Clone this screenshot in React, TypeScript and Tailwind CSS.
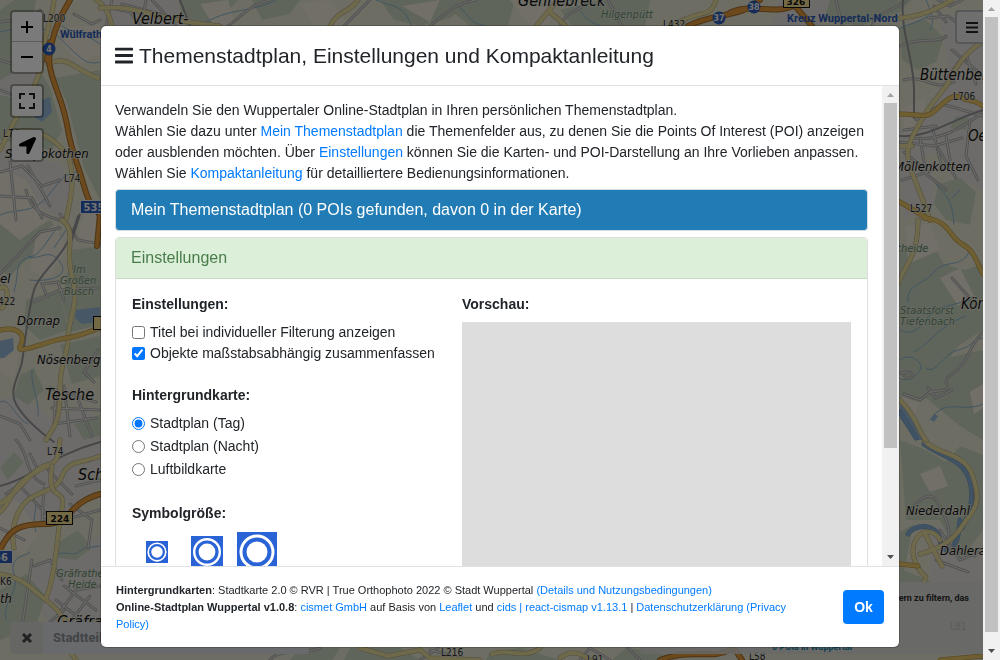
import React from "react";
import { FaBars, FaLocationArrow } from "react-icons/fa";

type RoadStyle = "motorway" | "primary" | "secondary" | "street" | "rail" | "stream" | "river";

const styles: Record<RoadStyle, { casing?: string; casingW?: number; color: string; w: number }> = {
  motorway: { casing: "#9a6a2c", casingW: 6, color: "#d9903a", w: 4 },
  primary: { casing: "#a8863c", casingW: 5, color: "#dcbc62", w: 4 },
  secondary: { casing: "#a39b7c", casingW: 5, color: "#dfd398", w: 4 },
  street: { casing: "#a6a6a4", casingW: 3, color: "#dadada", w: 1 },
  rail: { color: "#8f8f92", w: 2 },
  stream: { color: "#82abc8", w: 1 },
  river: { casing: "#6f93b4", casingW: 5, color: "#7fa6c8", w: 4 },
};

const forests = [
  "M55 78 L100 70 L100 200 L84 168 L66 100 Z",
  "M0 95 L26 100 L40 70 L50 88 L62 130 L52 150 L0 140 Z",
  "M0 10 L14 0 L36 0 L30 40 L10 75 L0 80 Z",
  "M0 222 L30 232 L50 220 L62 236 L40 262 L28 258 L10 276 L0 270 Z",
  "M72 250 L100 246 L100 325 L70 332 L62 300 Z",
  "M26 300 L60 290 L68 330 L40 340 L24 326 Z",
  "M20 375 L34 368 L44 390 L28 405 L14 396 Z",
  "M60 345 L100 336 L100 376 L72 384 Z",
  "M54 545 L78 530 L92 548 L76 560 L58 558 Z",
  "M0 590 L26 574 L46 596 L36 626 L0 640 Z",
  "M74 424 L100 415 L100 436 L84 440 Z",
  "M0 468 L14 452 L24 462 L8 480 Z",
  "M178 0 L238 0 L224 14 L206 26 L186 26 Z",
  "M252 0 L300 0 L290 14 L262 20 Z",
  "M380 0 L472 0 L450 18 L420 26 L394 20 Z",
  "M438 0 L515 0 L508 26 L470 26 Z",
  "M560 10 L600 0 L650 0 L645 26 L572 26 Z",
  "M830 0 L912 0 L900 12 L860 26 L824 20 Z",
  "M900 28 L924 18 L944 38 L936 62 L918 70 L902 60 Z",
  "M938 184 L960 178 L976 192 L970 225 L946 220 L934 204 Z",
  "M956 116 L968 118 L966 130 L950 128 Z",
  "M900 250 L930 240 L944 264 L964 270 L983 264 L983 330 L958 346 L940 372 L900 376 Z",
  "M900 380 L928 362 L983 350 L983 440 L960 426 L926 398 L900 410 Z",
  "M900 440 L926 450 L946 462 L960 446 L983 455 L983 530 L960 560 L940 520 L906 520 Z",
  "M900 532 L914 524 L904 570 L932 582 L900 582 Z",
  "M300 648 L340 648 L332 660 L290 660 Z",
  "M350 648 L400 648 L420 660 L344 660 Z",
  "M490 652 L520 648 L560 660 L486 660 Z",
  "M626 648 L660 652 L668 660 L612 660 Z",
];

const fields = [
  "M66 28 L100 24 L100 54 L80 64 L64 48 Z",
  "M0 168 L26 180 L48 220 L20 240 L0 224 Z",
  "M36 236 L56 224 L66 250 L48 280 L30 270 Z",
  "M0 340 L20 346 L14 380 L0 372 Z",
  "M88 190 L100 210 L100 250 L78 240 Z",
  "M0 510 L16 500 L40 532 L22 556 L0 540 Z",
  "M200 4 L228 0 L236 26 L214 26 Z",
  "M300 4 L330 0 L350 26 L314 26 Z",
  "M402 6 L440 0 L430 22 Z",
  "M510 0 L560 0 L548 26 L530 26 Z",
  "M902 110 L926 96 L922 124 L904 138 Z",
  "M940 278 L960 268 L974 296 L958 306 Z",
  "M906 226 L930 224 L940 250 L908 264 Z",
  "M970 392 L983 384 L983 408 L974 414 Z",
  "M920 474 L940 466 L948 486 L930 492 Z",
  "M900 396 L918 402 L914 418 L900 420 Z",
];

const towns = [
  "M0 60 L18 70 L34 56 L38 80 L20 104 L0 110 Z",
  "M0 150 L30 158 L60 164 L74 190 L60 218 L28 200 L0 190 Z",
  "M0 400 L20 392 L52 420 L82 408 L100 420 L100 486 L70 520 L30 520 L0 500 Z",
  "M32 565 L100 536 L100 648 L60 640 L34 600 Z",
  "M100 0 L176 0 L186 26 L100 26 Z",
  "M940 18 L983 10 L983 190 L958 178 L936 150 L902 172 L900 130 L926 112 L948 68 Z",
  "M900 172 L932 162 L934 205 L904 220 Z",
  "M932 530 L954 520 L983 560 L983 582 L930 582 Z",
  "M780 0 L830 0 L820 26 L770 26 Z",
];

const roads: { d: string; s: RoadStyle }[] = [
  { s: "stream", d: "M0 32 C20 28 44 22 62 40 S86 66 100 62 M62 26 C74 34 84 32 100 44" },
  { s: "stream", d: "M0 215 C16 208 30 214 44 200 S62 172 78 172 M14 292 C20 270 14 262 28 258 S46 242 58 226" },
  { s: "stream", d: "M28 256 C40 262 48 246 60 262 S44 282 30 280 M66 230 L54 248" },
  { s: "stream", d: "M32 370 C30 386 40 400 38 416 M0 402 C10 396 16 420 28 424" },
  { s: "stream", d: "M34 498 C40 508 30 516 36 532 M54 556 C66 548 72 560 84 548 L100 546 M6 620 C2 600 20 594 14 574 S30 556 30 552" },
  { s: "stream", d: "M376 0 C396 8 402 4 412 26 M456 4 C470 14 466 22 486 26 M200 26 C230 6 250 14 276 0" },
  { s: "stream", d: "M570 0 C584 10 580 18 600 26 M926 0 C930 10 936 20 930 30 M900 28 C908 24 922 22 930 14" },
  { s: "stream", d: "M936 184 C948 198 952 200 954 224 M952 198 L960 190 M908 302 C906 284 922 286 934 272 S962 270 970 250" },
  { s: "stream", d: "M900 330 C920 340 922 316 940 308 L970 300 M914 352 C930 344 938 326 966 316" },
  { s: "stream", d: "M926 368 C936 376 942 354 958 350 S970 340 983 338 M930 420 C946 396 962 414 983 404" },
  { s: "river", d: "M924 444 C940 456 960 458 968 476 S970 514 962 528 M908 534 C914 524 936 522 940 540 S958 552 960 520" },
  { s: "stream", d: "M900 360 C910 352 922 362 921 368 S906 384 900 378" },
  { s: "river", d: "M900 412 L916 438" },
  { s: "street", d: "M0 22 C18 18 30 24 40 10 M0 90 L20 98 L36 84 M0 60 C20 70 30 56 44 62 M74 14 L92 24 L100 20" },
  { s: "street", d: "M0 172 L22 166 L42 186 L60 180 M10 162 L16 220 M26 190 C30 210 44 216 60 220 M28 166 L50 206 M0 196 L32 198 L42 218" },
  { s: "street", d: "M0 274 L40 232 L60 228 M34 302 L60 290 L98 288 M46 294 L42 284 L58 282 L64 300 M60 214 L78 240 L100 244 M98 350 L84 372 L94 382" },
  { s: "street", d: "M0 416 L20 424 L30 440 M50 388 L96 402 M56 392 L54 424 L96 418 M64 386 L70 436 M76 394 L92 436 M52 408 L100 410 M16 440 C30 454 24 476 44 484" },
  { s: "street", d: "M6 494 L40 470 M18 484 L52 520 M44 488 L42 520 L58 516 M70 504 L92 520 L88 548 M64 520 L100 510 M76 486 L100 480 M30 454 L38 470 M0 528 L24 540 M48 470 L72 494" },
  { s: "street", d: "M34 566 L50 560 L62 580 M56 600 L92 628 M64 586 L96 610 M60 612 L76 590 L100 586 M72 620 L90 596 M50 622 L64 610 M20 640 L32 560" },
  { s: "street", d: "M100 6 L130 12 L140 26 M112 0 L106 26 M122 4 L160 14 M146 0 L142 22 M152 0 L176 26 M228 26 C240 18 250 4 270 0 M344 26 L370 0" },
  { s: "street", d: "M430 26 C450 10 454 4 476 0 M560 26 C566 10 580 12 590 0 M608 0 L622 26 M836 0 L842 26 M872 26 C876 10 896 12 906 0" },
  { s: "street", d: "M900 46 C920 36 940 44 946 36 M928 18 L948 16 L964 28 M934 6 L946 22 M952 50 L983 76 M960 60 L946 80 M966 54 L976 84" },
  { s: "street", d: "M904 80 C924 74 934 92 954 82 M916 120 L942 104 L983 116 M912 138 C936 142 960 130 983 112 M932 126 L942 168 M904 130 L936 126" },
  { s: "street", d: "M900 142 L934 146 L962 138 M920 138 L926 174 L946 190 M938 148 L956 178 M970 120 L966 156 L978 180 M904 152 L928 172 L902 180 M946 136 L950 160" },
  { s: "street", d: "M983 332 C968 346 970 362 952 374 S966 388 930 392 L920 400 L904 394 M952 278 L968 296 M898 374 C916 366 916 384 904 376 M928 388 L936 398 L952 390" },
  { s: "street", d: "M912 508 C930 488 936 494 946 520 S936 542 950 548 L975 556 M940 530 L960 560 L978 552 M936 560 L968 572 M938 0 L950 6 L962 0" },
  { s: "street", d: "M270 660 C280 648 300 656 320 648 M420 660 L438 648 M580 660 L590 648 L610 660 M628 648 L640 660 M430 650 L470 660" },
  { s: "rail", d: "M78 216 C66 260 40 270 34 290 S24 350 22 362 S8 390 16 404 S40 432 54 442 M0 486 C28 480 50 456 100 442 M80 214 L72 240" },
  { s: "rail", d: "M903 0 C900 30 914 60 914 90 L914 118 M900 136 C930 138 950 120 983 110 M956 536 C966 520 978 510 974 490 M180 0 L190 26" },
  { s: "secondary", d: "M54 0 C52 22 44 34 42 58 S28 96 12 126 L0 150 M48 64 C68 54 74 70 98 78 M8 136 C34 120 66 146 70 162 S72 194 66 220" },
  { s: "secondary", d: "M62 220 C78 232 64 248 72 276 S68 320 68 338 S60 360 60 390 S56 424 46 440 M0 288 C10 282 8 304 2 308 M94 -2 C100 2 108 8 112 26" },
  { s: "secondary", d: "M0 512 C12 502 10 486 36 472 S56 464 60 440 M14 548 C10 530 16 510 28 500 S56 492 62 476 S80 464 100 456 M0 504 C24 488 32 466 52 464" },
  { s: "secondary", d: "M52 466 C50 480 50 490 58 494 S62 508 60 518 M60 520 C56 550 54 580 46 598 M0 574 C24 578 30 588 46 600 S60 616 72 628 L100 622" },
  { s: "secondary", d: "M330 26 C340 8 346 16 358 0 M536 26 L558 0 M100 8 C140 4 150 20 220 26 M550 12 L566 26 M672 26 C700 8 710 20 716 0" },
  { s: "secondary", d: "M983 42 C970 48 956 66 952 76 S932 102 924 116 S906 144 908 158 S920 190 930 220 M900 146 L912 146 M918 220 C918 258 906 262 898 284" },
  { s: "secondary", d: "M900 18 C924 16 938 8 952 0 M924 440 C934 454 964 452 972 474 S978 506 968 518 S956 544 920 554 M940 540 C930 522 908 536 914 558 S930 572 924 582 M924 532 L942 566" },
  { s: "secondary", d: "M900 400 C918 418 918 432 926 440 M360 648 L388 656 L420 650 L430 658 L480 660 M492 654 C510 648 524 660 540 648 M70 652 L76 660 M560 658 C570 650 580 652 590 660" },
  { s: "primary", d: "M0 330 C20 326 26 336 20 346 S50 340 66 338 S92 330 100 328 M900 114 C924 114 926 120 938 108 S956 94 962 98 S972 98 983 106" },
  { s: "primary", d: "M924 218 C950 220 948 236 962 244 S976 262 983 274 M900 202 L930 220 M940 660 L983 656 M900 564 L918 566" },
  { s: "motorway", d: "M70 0 C62 14 56 24 52 42 S48 64 54 82 S64 106 68 130 S76 158 84 186 S98 208 100 216 M50 42 L47 60" },
  { s: "motorway", d: "M0 550 C10 528 20 524 46 524 S66 504 100 494 M100 214 L97 246 M688 26 C710 14 742 16 754 4 L760 0 M728 14 C750 0 780 20 802 0 M790 0 L812 26" },
  { s: "motorway", d: "M660 660 C690 648 712 660 730 650 M734 648 L742 660" },
];

function MapCanvas() {
  const italic = { fontFamily: "'DejaVu Sans Condensed','DejaVu Sans',sans-serif", fontStyle: "italic" as const };
  const places: [string, number, number, number][] = [
    ["Velbert-", 132, 24, 16],
    ["Gennebreck", 518, 6, 16],
    ["Schöpokothen", 5, 158, 13],
    ["el", 0, 283, 13],
    ["Dornap", 17, 325, 13],
    ["Nösenberg", 37, 364, 13],
    ["Tesche", 45, 400, 16],
    ["Schöller", 78, 480, 16],
    ["th", 0, 603, 13],
    ["Gräfrath", 57, 627, 16],
    ["Büttenberg", 920, 80, 15],
    ["Oede", 968, 141, 15],
    ["Möllenkotten", 894, 171, 13],
    ["König", 961, 309, 15],
    ["Niederdahl", 906, 515, 13],
    ["Dahlerau", 940, 555, 13],
  ];
  const nature: [string, number, number][] = [
    ["Im", 73, 273], ["Großen", 60, 284], ["Busch", 64, 295],
    ["Gräfrather", 56, 577], ["Heide", 68, 588], ["Hilgenpütt", 601, 18],
    ["theide", 897, 252], ["Staatsforst", 900, 314], ["Tiefenbach", 900, 325],
  ];
  const refs: [string, number, number][] = [
    ["L200", 43, 22], ["L74", 3, 137], ["L74", 64, 182], ["422", -2, 305], ["L74", 47, 455],
    ["K6", 0, 585], ["L432", 663, 28], ["L706", 953, 100], ["L527", 910, 212],
    ["L216", 441, 656], ["L91", 587, 663], ["L58", 749, 660], ["L81", 950, 630],
  ];
  return (
    <svg className="absolute inset-0 h-full w-full" viewBox="0 0 983 660" preserveAspectRatio="xMidYMid slice" aria-label="Stadtplan">
      <rect width="983" height="660" fill="#dbdbc8" />
      {towns.map((d) => <path key={d} d={d} fill="#dad7d2" />)}
      {forests.map((d) => <path key={d} d={d} fill="#bfcbb4" />)}
      {fields.map((d) => <path key={d} d={d} fill="#e2dfcf" />)}
      <path d="M42 100 L50 97 L52 112 L42 122 L34 117 Z M76 310 L100 307 L100 322 L82 324 L75 318 Z M0 341 L13 338 L14 350 L4 358 L0 358 Z M900 400 L914 416 L924 440 L916 440 L900 418 Z M934 414 L938 416 L934 422 L931 420 Z" fill="#8faecb" />
      {roads.map((r) => {
        const s = styles[r.s];
        return (
          <g key={r.d} fill="none" strokeLinecap="round">
            {s.casing && <path d={r.d} stroke={s.casing} strokeWidth={s.casingW} />}
            <path d={r.d} stroke={s.color} strokeWidth={s.w} />
          </g>
        );
      })}
      <g style={italic} fill="#111111" stroke="#dcdcd0" strokeWidth="1.5" paintOrder="stroke">
        {places.map(([t, x, y, size]) => <text key={t} x={x} y={y} fontSize={size}>{t}</text>)}
      </g>
      <g style={italic} fontSize="11" fill="#64836d" stroke="#d5dcc8" strokeWidth="1" paintOrder="stroke">
        {nature.map(([t, x, y]) => <text key={t} x={x} y={y}>{t}</text>)}
      </g>
      <g fontFamily="'DejaVu Sans Condensed','DejaVu Sans',sans-serif" fontSize="10" fill="#2c2c2c" stroke="#dcdcd0" strokeWidth="1" paintOrder="stroke">
        {refs.map(([t, x, y]) => <text key={`${t}${x}`} x={x} y={y}>{t}</text>)}
      </g>
      <g fontFamily="Roboto,'Noto Sans',sans-serif" fontWeight="700" fontSize="11" fill="#2b57b0">
        <text x="60" y="38">Wülfrath</text>
        <text x="787" y="22">Kreuz Wuppertal-Nord</text>
      </g>
      <g fontFamily="'DejaVu Sans',sans-serif" fontWeight="700" fontSize="8" fill="#e8e8e8" textAnchor="middle">
        <circle cx="49" cy="49" r="6.5" fill="#2a58b0" /><text x="49" y="52">4</text>
        <circle cx="719" cy="18" r="6.5" fill="#2a58b0" /><text x="719" y="21">37</text>
        <circle cx="754" cy="7" r="6.5" fill="#2a58b0" /><text x="754" y="10">38</text>
        <rect x="80.5" y="200.5" width="26" height="13" fill="#2a58b0" stroke="#dddddd" /><text x="94" y="211" fontSize="10">535</text>
        <rect x="-8.5" y="550.5" width="21" height="13" fill="#2a58b0" stroke="#dddddd" /><text x="1" y="561" fontSize="10">46</text>
      </g>
      <g fontFamily="'DejaVu Sans',sans-serif" fontWeight="700" fontSize="9" fill="#111111" textAnchor="middle">
        <rect x="46.5" y="511.5" width="26" height="13" fill="#e8d38a" stroke="#111111" /><text x="60" y="522">224</text>
        <rect x="783.5" y="-5.5" width="26" height="13" fill="#e8d38a" stroke="#111111" /><text x="796" y="5">326</text>
        <rect x="93.5" y="316.5" width="26" height="13" fill="#e8d38a" stroke="#111111" />
      </g>
    </svg>
  );
}

function ScrollBar({ thumb }: { thumb: string }) {
  return (
    <div className="flex w-[17px] shrink-0 flex-col items-center bg-[#f1f1f1]" aria-hidden="true">
      <svg className="h-[17px] w-[17px] shrink-0" viewBox="0 0 17 17"><path d="M5 11 L8.5 7 L12 11 Z" fill="#a3a3a3" /></svg>
      <div className="flex w-[13px] flex-1 flex-col">
        <div className={`bg-[#c1c1c1] ${thumb}`} />
      </div>
      <svg className="h-[17px] w-[17px] shrink-0" viewBox="0 0 17 17"><path d="M5 6 L12 6 L8.5 10 Z" fill="#505050" /></svg>
    </div>
  );
}

const controlBox = "flex flex-col overflow-hidden rounded border-2 border-black/30 bg-[#f4f4f4] bg-clip-padding text-black";
const controlButton = "flex h-[30px] w-[30px] items-center justify-center";

function MapControls() {
  return (
    <>
      <div className="absolute left-[10px] top-[10px] flex flex-col gap-[10px]">
        <div className={controlBox}>
          <button className={`${controlButton} border-b border-[#bbbbbb]`} aria-label="Vergrößern">
            <svg width="14" height="14" viewBox="0 0 14 14"><path d="M1 7 H13 M7 1 V13" stroke="black" strokeWidth="2" /></svg>
          </button>
          <button className={controlButton} aria-label="Verkleinern">
            <svg width="14" height="14" viewBox="0 0 14 14"><path d="M1 7 H13" stroke="black" strokeWidth="2" /></svg>
          </button>
        </div>
        <div className={controlBox}>
          <button className={controlButton} aria-label="Vollbild">
            <svg width="18" height="18" viewBox="0 0 18 18"><path d="M2 7 V2 H7 M11 2 H16 V7 M16 11 V16 H11 M7 16 H2 V11" fill="none" stroke="#222" strokeWidth="2" /></svg>
          </button>
        </div>
        <div className={controlBox}>
          <button className={controlButton} aria-label="Standort"><FaLocationArrow size={17} /></button>
        </div>
      </div>
      <button className="absolute right-0 top-[10px] flex h-[34px] w-[28px] items-center justify-center rounded-l border-2 border-r-0 border-[#b0b0b0] bg-[#dedede] pl-1" aria-label="Menü">
        <svg width="12" height="11" viewBox="0 0 12 11"><path d="M0 1 H12 M0 5.5 H12 M0 10 H12" stroke="#222" strokeWidth="2" /></svg>
      </button>
      <div className="absolute bottom-[6px] left-[10px] flex h-8 w-[299px] overflow-hidden rounded">
        <button className="flex w-[33px] items-center justify-center bg-[#cdcdcb]" aria-label="Suche löschen">
          <svg width="10" height="10" viewBox="0 0 10 10"><path d="M1 1 L9 9 M9 1 L1 9" stroke="#444" strokeWidth="3" /></svg>
        </button>
        <input
          className="min-w-0 flex-1 bg-[#d2d4d8] px-[10px] font-[Roboto,sans-serif] text-[13px] font-bold placeholder:text-[#83868c]"
          aria-label="Suche"
          placeholder="Stadtteil | Adresse | POI"
        />
      </div>
      <div className="absolute bottom-[6px] right-0 flex h-[72px] w-[343px] flex-col justify-between rounded-l bg-[#d0d0d0]/85 px-[14px] pt-[10px] font-[Roboto,sans-serif] text-[9px] font-bold text-[#2c2c2c]">
        <p className="text-right">ern zu filtern, das</p>
        <p className="pl-[118px] text-[#1f7fa0]">0 POIs in Wuppertal</p>
      </div>
    </>
  );
}

function Choice({ type, name, label, checked }: { type: "checkbox" | "radio"; name: string; label: string; checked?: boolean }) {
  return (
    <label className="flex h-[21px] items-center gap-[5px] whitespace-nowrap">
      <input type={type} name={name} defaultChecked={checked} className="m-0 h-[13px] w-[13px] shrink-0 accent-[#0075ff]" />
      {label}
    </label>
  );
}

function SymbolButton({ box, label }: { box: string; label: string }) {
  return (
    <button className={`shrink-0 ${box}`} aria-label={label}>
      <svg className="h-full w-full" viewBox="0 0 40 40">
        <rect width="40" height="40" fill="#2a63d6" />
        <circle cx="20" cy="20" r="16" fill="none" stroke="white" strokeWidth="3" />
        <circle cx="20" cy="20" r="10.5" fill="white" />
      </svg>
    </button>
  );
}

const link = "text-[#007bff]";

function SettingsPanel() {
  return (
    <section className="mt-[6px] rounded border border-[#dfdfdf]">
      <button className="flex h-[41px] w-full items-center rounded-t border-b border-[#c9ddc4] bg-[#dcefd8] px-[15px] pb-[2px] text-[16px] text-[#4b7d4c]">
        Einstellungen
      </button>
      <div className="grid grid-cols-[330fr_389fr] px-4 pt-[15px] pb-4">
        <div>
          <h3 className="mb-[7px] font-bold">Einstellungen:</h3>
          <Choice type="checkbox" name="titel" label="Titel bei individueller Filterung anzeigen" />
          <Choice type="checkbox" name="cluster" label="Objekte maßstabsabhängig zusammenfassen" checked />
          <h3 className="mb-[7px] mt-[21px] font-bold">Hintergrundkarte:</h3>
          <div className="flex flex-col gap-[2px]">
            <Choice type="radio" name="karte" label="Stadtplan (Tag)" checked />
            <Choice type="radio" name="karte" label="Stadtplan (Nacht)" />
            <Choice type="radio" name="karte" label="Luftbildkarte" />
          </div>
          <h3 className="mb-2 mt-[23px] font-bold">Symbolgröße:</h3>
          <div className="flex items-center pl-[14px]">
            <SymbolButton box="mr-[23px] h-[22px] w-[22px]" label="Klein" />
            <SymbolButton box="mr-[14px] h-8 w-8" label="Mittel" />
            <SymbolButton box="h-10 w-10" label="Groß" />
          </div>
        </div>
        <div>
          <h3 className="mb-[7px] font-bold">Vorschau:</h3>
          <div className="h-[300px] bg-[#dddddd]" />
        </div>
      </div>
    </section>
  );
}

function SettingsDialog() {
  return (
    <div className="fixed inset-0 flex items-start justify-center pt-[25px]">
      <div role="dialog" aria-labelledby="dialog-title" className="flex w-full max-w-[800px] flex-col overflow-hidden rounded-md border border-black/20 bg-white bg-clip-padding font-['Liberation_Sans',Arial,sans-serif] text-[14px] leading-[21px] text-[#212529]">
        <header className="flex h-[60px] items-center gap-[6px] border-b border-[#dee2e6] px-[14px]">
          <FaBars className="h-[21px] w-[18px]" />
          <h1 id="dialog-title" className="text-[21px] leading-[25px]">Themenstadtplan, Einstellungen und Kompaktanleitung</h1>
        </header>
        <div className="flex h-[calc(100vh-180px)]">
          <div className="min-w-0 flex-1 overflow-hidden p-[14px]">
            <p>
              Verwandeln Sie den Wuppertaler Online-Stadtplan in Ihren persönlichen Themenstadtplan.
              <br />
              Wählen Sie dazu unter <a href="#mein" className={link}>Mein Themenstadtplan</a> die Themenfelder aus, zu denen Sie die Points Of
              Interest (POI) anzeigen oder ausblenden möchten. Über <a href="#einstellungen" className={link}>Einstellungen</a> können Sie die
              Karten- und POI-Darstellung an Ihre Vorlieben anpassen. Wählen Sie <a href="#anleitung" className={link}>Kompaktanleitung</a> für
              detailliertere Bedienungsinformationen.
            </p>
            <button className="mt-[5px] flex h-[42px] w-full items-center rounded border border-[#d5dde3] bg-[#217bb4] px-[15px] pb-[2px] text-[16px] text-white">
              Mein Themenstadtplan (0 POIs gefunden, davon 0 in der Karte)
            </button>
            <SettingsPanel />
          </div>
          <ScrollBar thumb="h-[345px]" />
        </div>
        <footer className="flex h-[81px] items-center justify-between border-t border-[#dee2e6] pl-[15px] pr-[15px]">
          <p className="max-w-[690px] text-[11px] leading-[17px]">
            <b>Hintergrundkarten</b>: Stadtkarte 2.0 © RVR | True Orthophoto 2022 © Stadt Wuppertal{" "}
            <a href="#details" className={link}>(Details und Nutzungsbedingungen)</a>
            <br />
            <b>Online-Stadtplan Wuppertal v1.0.8</b>: <a href="#cismet" className={link}>cismet GmbH</a> auf Basis von{" "}
            <a href="#leaflet" className={link}>Leaflet</a> und <a href="#cids" className={link}>cids | react-cismap v1.13.1</a> |{" "}
            <a href="#datenschutz" className={link}>Datenschutzerklärung (Privacy Policy)</a>
          </p>
          <button className="h-[34px] w-[41px] shrink-0 rounded bg-[#007bff] text-[14px] font-bold text-white">Ok</button>
        </footer>
      </div>
    </div>
  );
}

export default function App() {
  return (
    <div className="flex h-screen overflow-hidden">
      <main className="relative min-w-0 flex-1 overflow-hidden">
        <MapCanvas />
        <MapControls />
        <div className="absolute inset-0 bg-black/50" />
      </main>
      <ScrollBar thumb="h-[615px]" />
      <SettingsDialog />
    </div>
  );
}
